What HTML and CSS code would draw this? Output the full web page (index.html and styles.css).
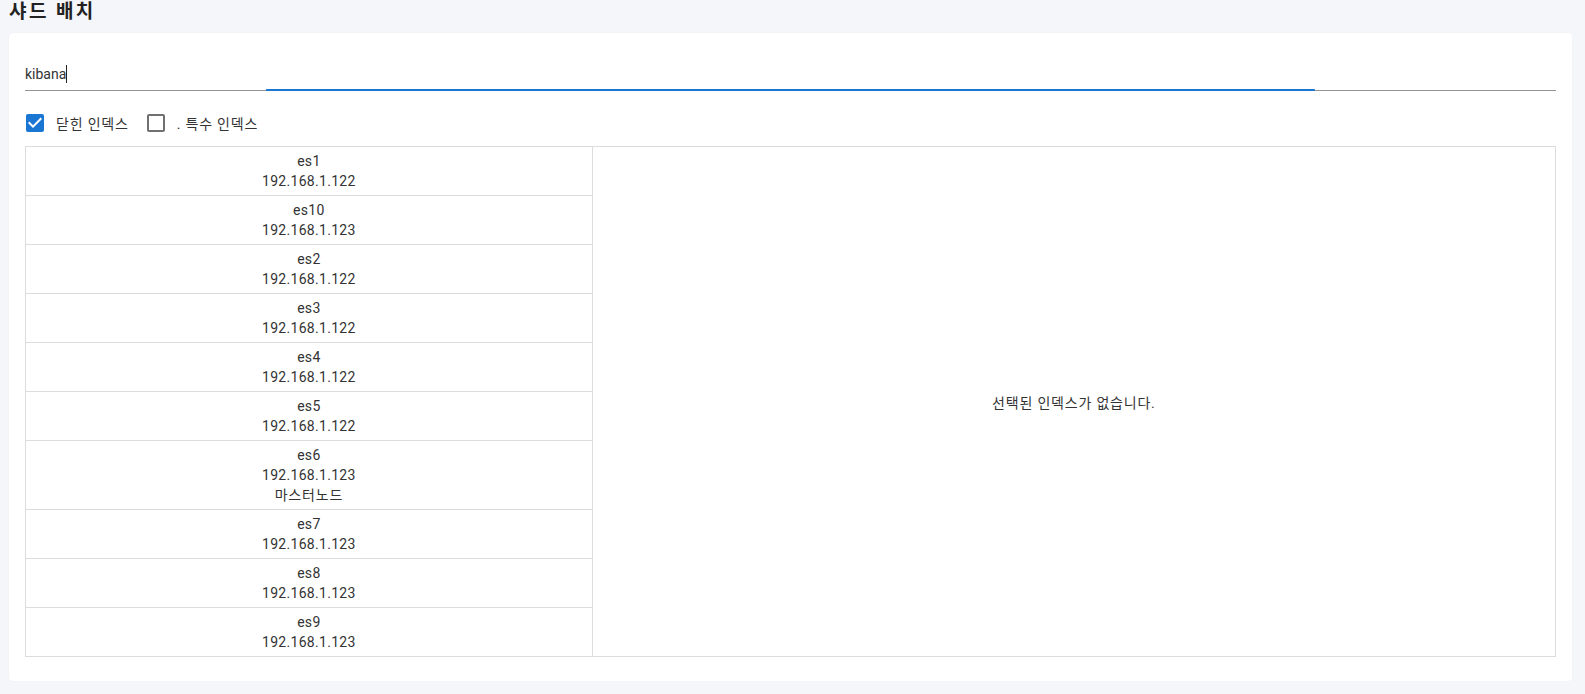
FILE: index.html
```html
<!DOCTYPE html>
<html lang="ko">
<head>
<meta charset="utf-8">
<title>샤드 배치</title>
<link rel="stylesheet" href="styles.css">
</head>
<body>
<div class="page">
  <h1 class="title">샤드 배치</h1>
  <div class="card">
    <div class="field">
      <span class="field-text">kibana</span><span class="caret"></span>
    </div>
    <div class="options">
      <label class="check">
        <svg class="box checked" viewBox="3 3 18 18" width="18" height="18"><path d="M19 3H5c-1.11 0-2 .9-2 2v14c0 1.1.89 2 2 2h14c1.11 0 2-.9 2-2V5c0-1.1-.89-2-2-2zm-9 14l-5-5 1.41-1.41L10 14.17l7.59-7.59L19 8l-9 9z"/></svg>
        <span class="ko">닫힌 인덱스</span>
      </label>
      <label class="check">
        <svg class="box" viewBox="3 3 18 18" width="18" height="18"><path d="M19 5v14H5V5h14m0-2H5c-1.1 0-2 .9-2 2v14c0 1.1.9 2 2 2h14c1.1 0 2-.9 2-2V5c0-1.1-.9-2-2-2z"/></svg>
        <span class="ko">. 특수 인덱스</span>
      </label>
    </div>
    <div class="grid">
      <div class="nodes">
        <div class="node"><div>es1</div><div>192.168.1.122</div></div>
        <div class="node"><div>es10</div><div>192.168.1.123</div></div>
        <div class="node"><div>es2</div><div>192.168.1.122</div></div>
        <div class="node"><div>es3</div><div>192.168.1.122</div></div>
        <div class="node"><div>es4</div><div>192.168.1.122</div></div>
        <div class="node"><div>es5</div><div>192.168.1.122</div></div>
        <div class="node"><div>es6</div><div>192.168.1.123</div><div class="ko">마스터노드</div></div>
        <div class="node"><div>es7</div><div>192.168.1.123</div></div>
        <div class="node"><div>es8</div><div>192.168.1.123</div></div>
        <div class="node"><div>es9</div><div>192.168.1.123</div></div>
      </div>
      <div class="detail"><span class="ko">선택된 인덱스가 없습니다.</span></div>
    </div>
  </div>
</div>
</body>
</html>
```

FILE: styles.css
```css
html, body {
  margin: 0;
  padding: 0;
  background: #f5f6fa;
}
body {
  font-family: Roboto, "Noto Sans CJK KR", sans-serif;
  color: #333;
  font-size: 14px;
}
.page {
  padding: 0 13px 13px 9px;
}
.title {
  margin: 0 0 9px;
  font-size: 19px;
  line-height: 24px;
  font-weight: 700;
  letter-spacing: 2.4px;
  color: #222;
}
.ko {
  letter-spacing: 0.8px;
}
.card {
  background: #fff;
  border-radius: 4px;
  box-shadow: 0 0 2px rgba(0, 0, 0, 0.04);
  padding: 16px 16px 24px;
}
.field {
  position: relative;
  display: flex;
  align-items: center;
  padding: 15px 0 6px;
  line-height: 20px;
  border-bottom: 1px solid #949494;
}
.field::after {
  content: "";
  position: absolute;
  left: 0;
  right: 0;
  bottom: -1px;
  height: 2px;
  background: #1976d2;
  transform: scaleX(0.685);
}
.field-text {
  font-size: 14px;
  color: #333;
}
.caret {
  display: inline-block;
  width: 1px;
  height: 18px;
  background: #222;
}
.options {
  display: flex;
  align-items: center;
  gap: 18px;
  height: 38px;
  margin-top: 13px;
  padding-left: 1px;
}
.check {
  display: flex;
  align-items: center;
  gap: 12px;
  font-size: 14px;
  color: #333;
}
.box {
  display: block;
  fill: #707070;
}
.box.checked {
  fill: #1976d2;
}
.grid {
  display: grid;
  grid-template-columns: 37% 1fr;
  margin-top: 4px;
  border: 1px solid #dcdcdc;
}
.node {
  padding: 4px 0;
  line-height: 20px;
  text-align: center;
  letter-spacing: 0.3px;
  border-bottom: 1px solid #dcdcdc;
}
.node:last-child {
  border-bottom: none;
}
.detail {
  display: flex;
  align-items: center;
  justify-content: center;
  border-left: 1px solid #dcdcdc;
}
```
